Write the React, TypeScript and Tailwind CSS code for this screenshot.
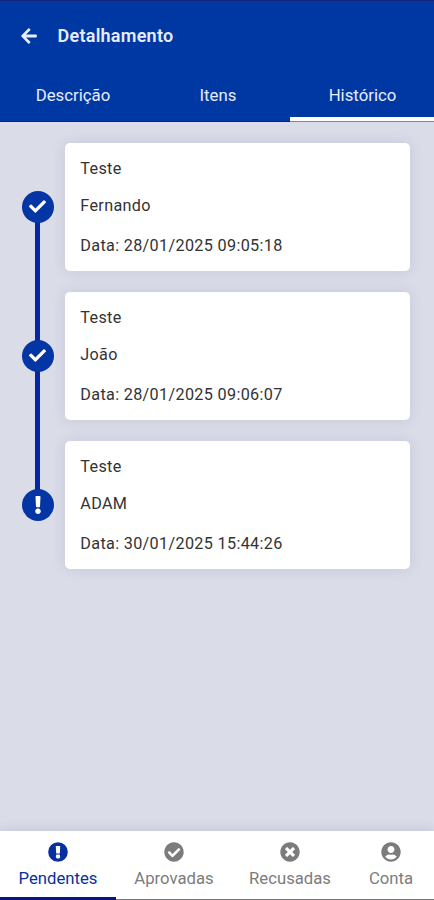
import { useState } from 'react';
import {
  FaArrowLeft,
  FaCheck,
  FaCheckCircle,
  FaExclamation,
  FaTimesCircle,
  FaUserCircle,
} from 'react-icons/fa';

interface HistoryItem {
  title: string;
  user: string;
  date: string;
  done: boolean;
}

const PendingIcon = () => (
  <svg width="20" height="20" viewBox="0 0 20 20">
    <circle cx="10" cy="10" r="9.8" fill="currentColor" />
    <path d="M7.8 4h4.4l-.4 7.4H8.2z" fill="#fff" />
    <rect x="7.9" y="12.6" width="4.2" height="3.8" rx="1.4" fill="#fff" />
  </svg>
);

const tabs = ['Descrição', 'Itens', 'Histórico'];

const history: HistoryItem[] = [
  { title: 'Teste', user: 'Fernando', date: '28/01/2025 09:05:18', done: true },
  { title: 'Teste', user: 'João', date: '28/01/2025 09:06:07', done: true },
  { title: 'Teste', user: 'ADAM', date: '30/01/2025 15:44:26', done: false },
];

const navItems = [
  { label: 'Pendentes', icon: <PendingIcon />, width: 'w-[116px]' },
  { label: 'Aprovadas', icon: <FaCheckCircle size={20} />, width: 'w-[116px]' },
  { label: 'Recusadas', icon: <FaTimesCircle size={20} />, width: 'w-[116px]' },
  { label: 'Conta', icon: <FaUserCircle size={20} />, width: 'w-[86px]' },
];

const Header = ({ active, onChange }: { active: number; onChange: (index: number) => void }) => (
  <header className="flex h-[122px] flex-col border-t border-[#14257a] bg-[#0038a3] text-[#e6edff]">
    <div className="flex h-[70px] items-center pl-[20px]">
      <button aria-label="Voltar">
        <FaArrowLeft size={18} />
      </button>
      <h1 className="-mt-px ml-[19.5px] text-[18px] leading-6 font-semibold tracking-[0.25px]">
        Detalhamento
      </h1>
    </div>
    <div className="grid flex-1 grid-cols-[145px_145px_144px]">
      {tabs.map((tab, index) => (
        <button
          key={tab}
          onClick={() => onChange(index)}
          className={`flex justify-center border-b pt-[12px] pl-px text-[16.8px] leading-6 ${
            index === active
              ? 'border-[#7187bb] shadow-[inset_0_-4px_0_#ffffff]'
              : 'border-[#0a1f93]'
          }`}
        >
          {tab}
        </button>
      ))}
    </div>
  </header>
);

const HistoryRow = ({ item, last }: { item: HistoryItem; last: boolean }) => (
  <li className="flex">
    <div className="relative w-[42.5px] shrink-0">
      {!last && <div className="absolute top-[64px] left-[13px] h-[149px] w-[5px] bg-[#0527a3]" />}
      <div className="relative mt-[48px] flex h-[31.5px] w-[31.5px] items-center justify-center rounded-full bg-[#0435a5] text-white">
        {item.done ? <FaCheck size={17} /> : <FaExclamation size={18} />}
      </div>
    </div>
    <div className="h-[128px] w-[345px] rounded-[5px] bg-white pl-[15.8px] text-[16.2px] tracking-[0.33px] text-[#333] shadow-[0_0_14px_rgba(60,60,120,0.12)]">
      <p className="mt-[14px] leading-6">{item.title}</p>
      <p className="mt-[13px] leading-6">{item.user}</p>
      <p className="mt-[16px] leading-6">Data: {item.date}</p>
    </div>
  </li>
);

const BottomNav = () => {
  const [active, setActive] = useState(0);

  return (
    <nav className="flex h-[69px] bg-white shadow-[0_-2px_10px_rgba(60,60,120,0.12)]">
      {navItems.map((item, index) => (
        <button
          key={item.label}
          onClick={() => setActive(index)}
          className={`flex flex-col items-center ${item.width} ${
            index === active
              ? 'text-[#0630a0] shadow-[inset_0_-3px_0_#06167c]'
              : 'text-[#7c7c7c] shadow-[inset_0_-1px_0_#777777]'
          }`}
        >
          <span className="mt-[9px] flex h-6 items-center">{item.icon}</span>
          <span className="mt-[3px] text-[16.7px] leading-6">{item.label}</span>
        </button>
      ))}
    </nav>
  );
};

const App = () => {
  const [tab, setTab] = useState(2);

  return (
    <div className="flex h-screen w-full flex-col overflow-hidden bg-[#dadce8] font-['Roboto',sans-serif]">
      <Header active={tab} onChange={setTab} />
      <main className="flex-1 pt-[21px] pl-[22px]">
        {tab === 2 && (
          <ul className="flex flex-col gap-[21.2px]">
            {history.map((item, index) => (
              <HistoryRow key={item.date} item={item} last={index === history.length - 1} />
            ))}
          </ul>
        )}
      </main>
      <BottomNav />
    </div>
  );
};

export default App;
